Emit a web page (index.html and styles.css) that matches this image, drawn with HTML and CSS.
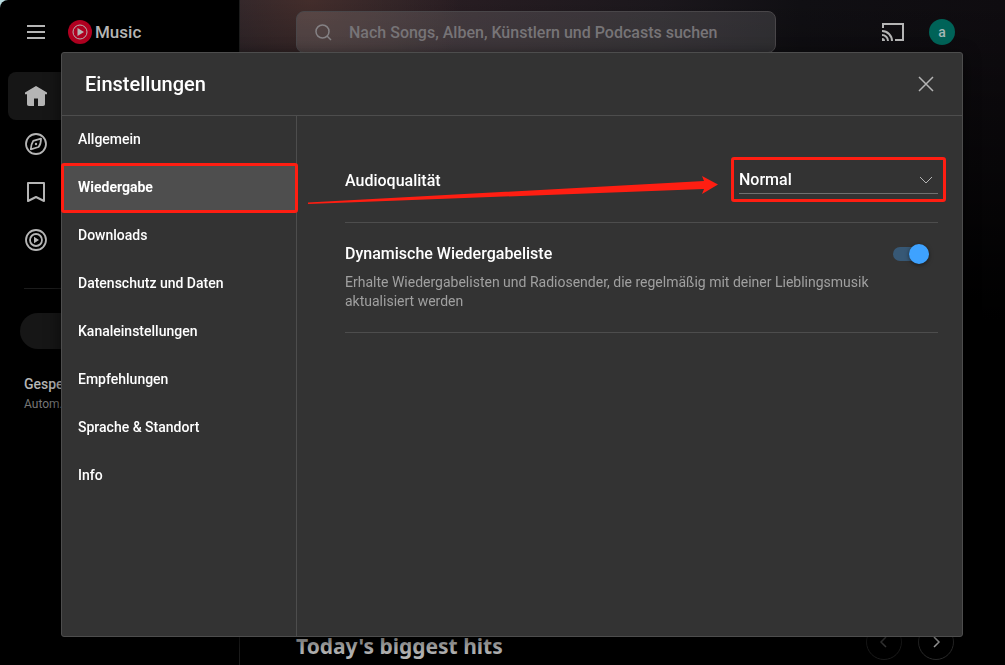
FILE: index.html
```html
<!DOCTYPE html>
<html lang="de">
<head>
  <meta charset="UTF-8" />
  <meta name="viewport" content="width=device-width, initial-scale=1.0" />
  <title>Music – Einstellungen</title>
  <link rel="stylesheet" href="styles.css">
</head>
<body>
  <div class="app">
    <aside class="sidebar">
      <div class="brand">
        <button class="icon-button" aria-label="Menü">
          <svg width="24" height="24" viewBox="0 0 24 24" fill="none" stroke="currentColor" stroke-width="2"><path d="M3 6h18M3 12h18M3 18h18" /></svg>
        </button>
        <a class="logo" href="#">
          <svg width="24" height="24" viewBox="0 0 24 24"><circle cx="12" cy="12" r="12" fill="#b00020" /><circle cx="12" cy="12" r="7" fill="none" stroke="#b5b5b5" /><path d="M9.500 8v8l6.500-4z" fill="#b5b5b5" /></svg>
          <span>Music</span>
        </a>
      </div>

      <nav class="main-nav" aria-label="Hauptmenü">
        <a class="main-link current" href="#" aria-label="Startseite">
          <svg width="24" height="24" viewBox="0 0 24 24" fill="currentColor"><path d="M12 2 1 8.500v1.800h2V20c0 1 .6 2 2 2h5v-7.500h4V22h5c1.400 0 2-1 2-2v-9.700h2V8.500z" /></svg>
        </a>
        <a class="main-link" href="#" aria-label="Entdecken">
          <svg width="24" height="24" viewBox="0 0 24 24" fill="none" stroke="currentColor" stroke-width="1.800" stroke-linejoin="round"><circle cx="12" cy="12" r="10" /><path d="M17 6.700 9.200 8.900Q7 12 6.800 17.300L14.600 15Q17 12 17 6.700z" /><circle cx="12" cy="12" r="1.200" fill="currentColor" stroke="none" /></svg>
        </a>
        <a class="main-link" href="#" aria-label="Mediathek">
          <svg width="24" height="24" viewBox="0 0 24 24" fill="none" stroke="currentColor" stroke-width="2" stroke-linejoin="round"><path d="M4 3h16v18l-8-4-8 4z" /></svg>
        </a>
        <a class="main-link" href="#" aria-label="Upgrade">
          <svg width="24" height="24" viewBox="0 0 24 24" fill="none" stroke="currentColor" stroke-width="1.800"><circle cx="12" cy="12" r="10" /><circle cx="12" cy="12" r="6" /><path d="M10 8.800v6.400l5-3.200z" fill="currentColor" stroke="none" /></svg>
        </a>
      </nav>

      <div class="library">
        <button class="new-playlist" aria-label="Neue Playlist"></button>
        <div class="saved">
          <p class="saved-title">Gespe</p>
          <p class="saved-text">Autom.</p>
        </div>
      </div>
    </aside>

    <main class="main">
      <header class="topbar">
        <label class="search">
          <svg width="24" height="24" viewBox="0 0 24 24" fill="none" stroke="currentColor" stroke-width="1.500"><circle cx="11.500" cy="11.500" r="6.500" /><path d="m16 16 4 4" /></svg>
          <input type="search" placeholder="Nach Songs, Alben, Künstlern und Podcasts suchen" aria-label="Suche">
        </label>
        <div class="account">
          <button class="icon-button" aria-label="Streamen">
            <svg width="24" height="24" viewBox="0 0 24 24" fill="none" stroke="currentColor" stroke-width="2"><path d="M2 8V4h20v16h-8M1 11a10 10 0 0 1 10 10M1 15a6 6 0 0 1 6 6" /><path d="M1 18v3h3a3 3 0 0 0-3-3z" fill="currentColor" stroke="none" /></svg>
          </button>
          <button class="avatar" aria-label="Konto">a</button>
        </div>
      </header>

      <section class="shelf">
        <h2>Today's biggest hits</h2>
        <div class="shelf-buttons">
          <button class="round-button" disabled aria-label="Zurück">
            <svg width="24" height="24" viewBox="0 0 24 24" fill="none" stroke="currentColor" stroke-width="1.500"><path d="m14 7-5 5 5 5" /></svg>
          </button>
          <button class="round-button" aria-label="Weiter">
            <svg width="24" height="24" viewBox="0 0 24 24" fill="none" stroke="currentColor" stroke-width="1.500"><path d="m10 7 5 5-5 5" /></svg>
          </button>
        </div>
      </section>
    </main>
  </div>

  <div class="overlay">
    <div class="dialog" role="dialog" aria-labelledby="dialogTitle">
      <header class="dialog-header">
        <h1 id="dialogTitle">Einstellungen</h1>
        <button class="icon-button close" aria-label="Schließen">
          <svg width="24" height="24" viewBox="0 0 24 24" fill="none" stroke="currentColor" stroke-width="1.500"><path d="m5 5 14 14M19 5 5 19" /></svg>
        </button>
      </header>

      <div class="dialog-body">
        <nav class="tabs" aria-label="Einstellungen">
          <a class="tab" href="#">Allgemein</a>
          <a class="tab active" href="#" aria-current="page">Wiedergabe</a>
          <a class="tab" href="#">Downloads</a>
          <a class="tab" href="#">Datenschutz und Daten</a>
          <a class="tab" href="#">Kanaleinstellungen</a>
          <a class="tab" href="#">Empfehlungen</a>
          <a class="tab" href="#">Sprache &amp; Standort</a>
          <a class="tab" href="#">Info</a>
        </nav>

        <section class="settings">
          <!-- Arrow from the active tab to the quality drop-down -->
          <svg class="arrow" viewBox="0 0 410 28" preserveAspectRatio="none" aria-hidden="true"><path d="M0 26.500 396 5l-2-5 16 8.500L394 18l2-5L0 28z" /></svg>

          <div class="setting quality">
            <label class="setting-title" for="quality">Audioqualität</label>
            <div class="select-box">
              <select id="quality">
                <option>Normal</option>
                <option>Niedrig</option>
                <option>Hoch</option>
              </select>
              <svg width="16" height="16" viewBox="0 0 16 16" fill="none" stroke="currentColor"><path d="m2 5 6 6 6-6" /></svg>
            </div>
          </div>

          <div class="setting playlist">
            <div>
              <label class="setting-title" for="dynamic">Dynamische Wiedergabeliste</label>
              <p class="setting-text">Erhalte Wiedergabelisten und Radiosender, die regelmäßig mit deiner Lieblingsmusik aktualisiert werden</p>
            </div>
            <input class="toggle" id="dynamic" type="checkbox" role="switch" checked>
          </div>
        </section>
      </div>
    </div>
  </div>
</body>
</html>
```
FILE: styles.css
```css
:root {
  --panel: #333;
  --line: #4d4d4d;
  --dim: #b5b5b5;
  --mark: #ff1e12;
}

* {
  box-sizing: border-box;
}

body {
  margin: 0;
  font-family: Roboto, Arial, sans-serif;
  background: #b9dce0;
  color: #fff;
}

h1,
h2,
p {
  margin: 0;
}

a {
  color: inherit;
  text-decoration: none;
}

button {
  padding: 0;
  border: 0;
  background: none;
  color: inherit;
  font: inherit;
}

svg {
  display: block;
  flex: none;
}

.app {
  display: grid;
  grid-template-columns: 240px 1fr;
  height: 100vh;
  overflow: hidden;
  border-top-left-radius: 8px;
  background: #000;
  color: var(--dim);
}

/* Sidebar */
.sidebar {
  border-right: 1px solid #1c1c1c;
}

.brand {
  display: flex;
  align-items: center;
  gap: 20px;
  height: 64px;
  padding-left: 24px;
}

.logo {
  display: flex;
  align-items: center;
  gap: 3px;
  font-size: 17px;
  font-weight: 500;
}

.main-nav {
  padding: 8px;
}

.main-link {
  display: flex;
  align-items: center;
  height: 48px;
  padding-left: 16px;
  border-radius: 8px;
}

.main-link.current {
  background: #161616;
}

.library {
  margin: 16px 20px 0 24px;
  padding-top: 24px;
  border-top: 1px solid #1c1c1c;
}

.new-playlist {
  display: block;
  width: calc(100% + 8px);
  height: 36px;
  margin-left: -4px;
  border-radius: 18px;
  background: #161616;
}

.saved {
  padding-top: 24px;
}

.saved-title {
  font-size: 14px;
  font-weight: 500;
  line-height: 22px;
}

.saved-text {
  font-size: 12px;
  line-height: 18px;
  color: #777;
}

/* Main area */
.main {
  display: flex;
  flex-direction: column;
  justify-content: space-between;
  background:
    linear-gradient(transparent, #000 320px),
    radial-gradient(circle at 70px 0, #432d2b 0, transparent 150px),
    linear-gradient(90deg, #24222a 0, #281d22 200px, #1b171c 420px, #100f13 560px, #0f0c10);
}

.topbar {
  display: flex;
  justify-content: space-between;
  align-items: center;
  height: 64px;
  padding: 0 50px 0 56px;
}

.search {
  display: flex;
  align-items: center;
  gap: 14px;
  width: 480px;
  height: 42px;
  padding: 0 14px;
  border: 1px solid #494649;
  border-radius: 8px;
  background: rgba(255, 255, 255, 0.13);
  color: #858285;
}

.search input {
  flex: 1;
  min-width: 0;
  padding: 0;
  border: 0;
  outline: 0;
  background: none;
  color: inherit;
  font: 500 16px Roboto, sans-serif;
}

.search input::placeholder {
  color: #777477;
}

.account {
  display: flex;
  align-items: center;
  gap: 24px;
}

.avatar {
  width: 26px;
  height: 26px;
  border-radius: 50%;
  background: #006358;
  color: #a5b8b5;
  font-size: 14px;
  font-weight: 500;
}

.shelf {
  display: flex;
  justify-content: space-between;
  align-items: flex-end;
  padding: 0 51px 5px 56px;
}

.shelf h2 {
  font: bold 21px/28px "Noto Sans", sans-serif;
}

.shelf-buttons {
  display: flex;
  gap: 16px;
}

.round-button {
  display: grid;
  place-items: center;
  width: 36px;
  height: 36px;
  border: 1px solid #2b2b2b;
  border-radius: 50%;
}

.round-button:disabled {
  border-color: #1c1c1c;
  color: #3d3d3d;
}

/* Settings dialog */
.overlay {
  position: fixed;
  inset: 0;
  display: flex;
  padding: 52px 42px 28px 61px;
}

.dialog {
  display: flex;
  flex: 1;
  flex-direction: column;
  border: 1px solid var(--line);
  border-radius: 3px;
  background: var(--panel);
  box-shadow: 0 4px 16px rgba(0, 0, 0, 0.6);
}

.dialog-header {
  display: flex;
  justify-content: space-between;
  align-items: center;
  height: 63px;
  padding: 0 24px 0 23px;
  border-bottom: 1px solid var(--line);
}

.dialog-header h1 {
  font-size: 20px;
  font-weight: 500;
}

.close {
  color: var(--dim);
}

.dialog-body {
  display: flex;
  flex: 1;
}

.tabs {
  width: 235px;
  border-right: 1px solid var(--line);
}

.tab {
  position: relative;
  display: flex;
  align-items: center;
  height: 48px;
  padding: 0 16px 2px;
  font-size: 14px;
  font-weight: 500;
}

.tab.active {
  background: #4e4e4e;
  font-weight: 700;
}

/* Red frames around the marked controls */
.tab.active::after,
.select-box::after {
  content: "";
  position: absolute;
  border: 3px solid var(--mark);
  border-radius: 3px;
  pointer-events: none;
}

.tab.active::after {
  inset: -1px -2px -1px -1px;
}

.select-box::after {
  inset: -9px -8px -8px;
}

.settings {
  position: relative;
  flex: 1;
  padding: 24px 24px 0 48px;
}

.arrow {
  position: absolute;
  top: 60px;
  left: 11px;
  width: calc(100% - 255px);
  height: 28px;
  fill: var(--mark);
}

.setting {
  display: flex;
  justify-content: space-between;
  border-bottom: 1px solid var(--line);
}

.quality {
  align-items: center;
  height: 83px;
}

.playlist {
  padding: 20px 9px 21px 0;
}

.setting-title {
  display: block;
  font-size: 16px;
  font-weight: 500;
  line-height: 22px;
}

.setting-text {
  max-width: 540px;
  padding-top: 8px;
  font-size: 14px;
  line-height: 19px;
  color: #a0a0a0;
}

.select-box {
  position: relative;
  width: 199px;
  margin-bottom: 2px;
}

.select-box select {
  display: block;
  width: 100%;
  height: 28px;
  padding: 0;
  border: 0;
  border-bottom: 1px solid #707070;
  border-radius: 0;
  outline: 0;
  appearance: none;
  background: transparent;
  color: inherit;
  font: 500 16px Roboto, sans-serif;
}

.select-box svg {
  position: absolute;
  top: 6px;
  right: 4px;
  color: var(--dim);
  pointer-events: none;
}

.toggle {
  position: relative;
  flex: none;
  width: 36px;
  height: 14px;
  margin: 4px 0 0;
  border-radius: 7px;
  appearance: none;
  background: #375875;
}

.toggle::after {
  content: "";
  position: absolute;
  top: -3px;
  left: 0;
  width: 20px;
  height: 20px;
  border-radius: 50%;
  background: #999;
  box-shadow: 0 1px 4px rgba(0, 0, 0, 0.5);
}

.toggle:checked::after {
  right: 0;
  left: auto;
  background: #3ea2ff;
}
```
